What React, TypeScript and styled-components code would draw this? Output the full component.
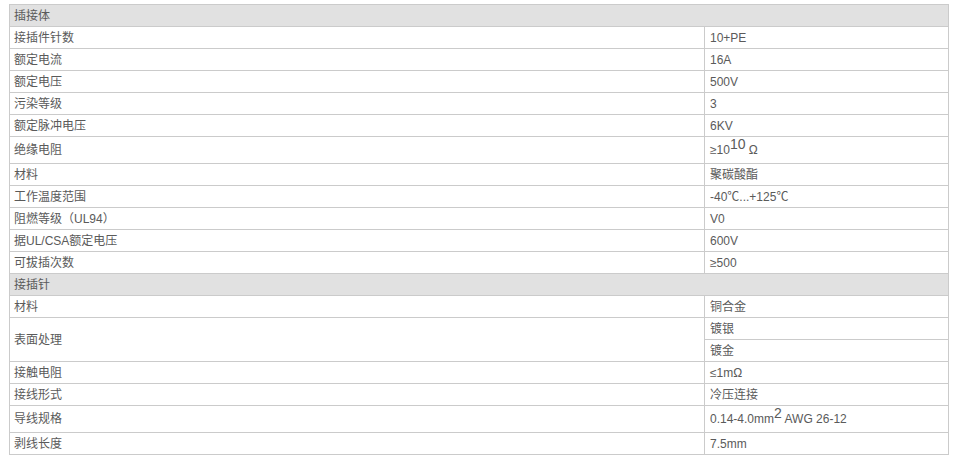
import React from "react";
import styled, { createGlobalStyle } from "styled-components";

const Global = createGlobalStyle`
  html, body { margin: 0; padding: 0; background: #fff; }
  body { font-family: "Liberation Sans", "Noto Sans CJK SC", sans-serif; }
`;

const Page = styled.div`
  padding: 4px 0 0 9px;
`;

const Table = styled.table`
  width: 940px;
  border-collapse: collapse;
  table-layout: fixed;
  font-size: 12px;
  color: #5a5a5a;
  font-family: "Liberation Sans", "Noto Sans CJK SC", sans-serif;
`;

const Cell = styled.td<{ $tall?: boolean }>`
  border: 1px solid #cbcbcb;
  height: ${(p) => (p.$tall ? 27 : 22)}px;
  padding: 0 0 0 4px;
  line-height: 14px;
  vertical-align: middle;
  box-sizing: border-box;
  white-space: nowrap;
`;

const HeaderCell = styled(Cell)`
  background: #e1e1e1;
`;

const LabelCell = styled(Cell)``;

const ValueCell = styled(Cell)`
  padding-left: 5px;
`;

const Sup = styled.sup`
  font-size: 14px;
  vertical-align: 5px;
  line-height: 0;
`;

type Row = { label: string; value: React.ReactNode; tall?: boolean };

const group1: Row[] = [
  { label: "接插件针数", value: "10+PE" },
  { label: "额定电流", value: "16A" },
  { label: "额定电压", value: "500V" },
  { label: "污染等级", value: "3" },
  { label: "额定脉冲电压", value: "6KV" },
  {
    label: "绝缘电阻",
    value: (
      <>
        ≥10<Sup>10</Sup> Ω
      </>
    ),
    tall: true,
  },
  { label: "材料", value: "聚碳酸酯" },
  { label: "工作温度范围", value: "-40℃...+125℃" },
  { label: "阻燃等级（UL94）", value: "V0" },
  { label: "据UL/CSA额定电压", value: "600V" },
  { label: "可拔插次数", value: "≥500" },
];

const group2after: Row[] = [
  { label: "接触电阻", value: "≤1mΩ" },
  { label: "接线形式", value: "冷压连接" },
  {
    label: "导线规格",
    value: (
      <>
        0.14-4.0mm<Sup>2</Sup> AWG 26-12
      </>
    ),
    tall: true,
  },
  { label: "剥线长度", value: "7.5mm" },
];

const renderRows = (rows: Row[]) =>
  rows.map((r) => (
    <tr key={r.label}>
      <LabelCell $tall={r.tall}>{r.label}</LabelCell>
      <ValueCell $tall={r.tall}>{r.value}</ValueCell>
    </tr>
  ));

export default function App() {
  return (
    <Page>
      <Global />
      <Table>
        <colgroup>
          <col style={{ width: 695 }} />
          <col />
        </colgroup>
        <tbody>
          <tr>
            <HeaderCell colSpan={2}>插接体</HeaderCell>
          </tr>
          {renderRows(group1)}
          <tr>
            <HeaderCell colSpan={2}>接插针</HeaderCell>
          </tr>
          <tr>
            <LabelCell>材料</LabelCell>
            <ValueCell>铜合金</ValueCell>
          </tr>
          <tr>
            <LabelCell rowSpan={2}>表面处理</LabelCell>
            <ValueCell>镀银</ValueCell>
          </tr>
          <tr>
            <ValueCell>镀金</ValueCell>
          </tr>
          {renderRows(group2after)}
        </tbody>
      </Table>
    </Page>
  );
}
